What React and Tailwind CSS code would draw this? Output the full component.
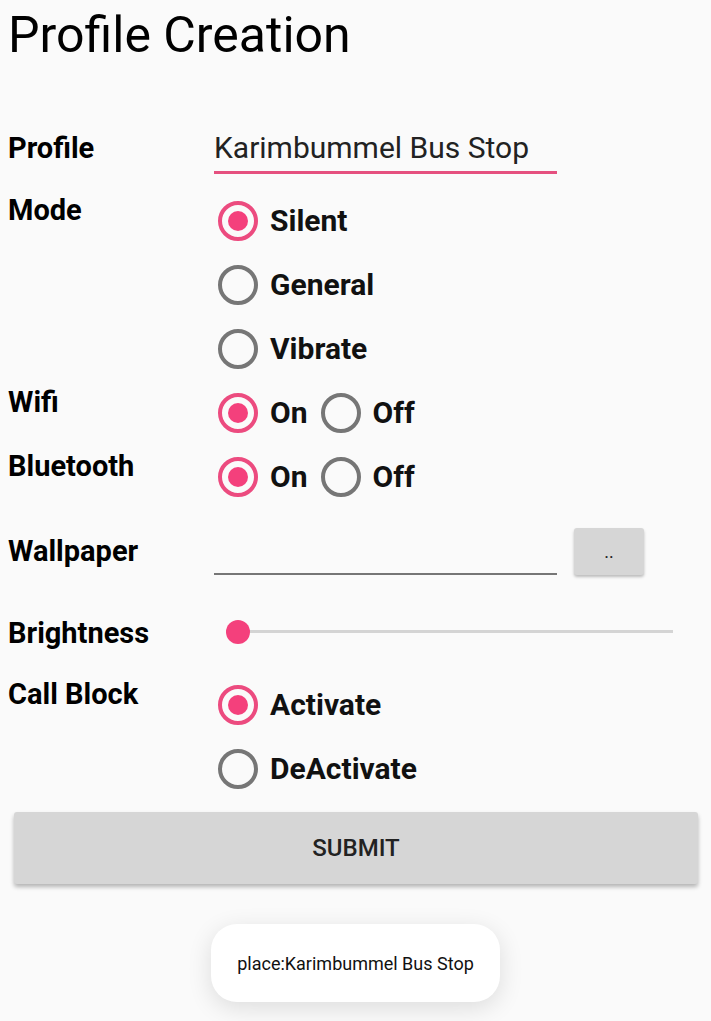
import React from "react";

function Radio({ checked, label, className = "" }) {
  return (
    <div className={"flex items-center " + className}>
      <div
        className={
          "w-[40px] h-[40px] rounded-full border-[4px] flex items-center justify-center shrink-0 " +
          (checked ? "border-[#ec4b7f]" : "border-[#767676]")
        }
      >
        {checked && <div className="w-[20px] h-[20px] rounded-full bg-[#f4407c]" />}
      </div>
      <span className="ml-[12px] text-[30px] font-bold text-[#111] leading-[32px]">{label}</span>
    </div>
  );
}

function Label({ children, mt = "mt-[5px]" }) {
  return (
    <div className={"pl-2 text-[29px] font-bold text-black leading-[32px] " + mt}>{children}</div>
  );
}

export default function App() {
  return (
    <div
      className="w-[711px] h-[1021px] bg-[#fafafa] overflow-hidden"
      style={{ fontFamily: "Roboto, 'Noto Sans', sans-serif" }}
    >
      <div className="h-[70px] flex items-center pl-2 text-[50px] text-black">Profile Creation</div>

      <div className="mt-[52px] grid grid-cols-[214px_1fr]">
        {/* Profile */}
        <Label mt="mt-[10px]">Profile</Label>
        <div className="h-[67px]">
          <div className="w-[343px] pt-[8px] pb-[5px] border-b-[3px] border-[#e5507f] text-[30px] leading-[36px] text-[#222]">
            Karimbummel Bus Stop
          </div>
        </div>

        {/* Mode */}
        <Label>Mode</Label>
        <div className="flex flex-col">
          <Radio checked label="Silent" className="h-[64px] pl-[4px]" />
          <Radio label="General" className="h-[64px] pl-[4px]" />
          <Radio label="Vibrate" className="h-[64px] pl-[4px]" />
        </div>

        {/* Wifi */}
        <Label>Wifi</Label>
        <div className="h-[64px] flex items-center pl-[4px]">
          <Radio checked label="On" />
          <Radio label="Off" className="ml-[13px]" />
        </div>

        {/* Bluetooth */}
        <Label>Bluetooth</Label>
        <div className="h-[64px] flex items-center pl-[4px]">
          <Radio checked label="On" />
          <Radio label="Off" className="ml-[13px]" />
        </div>

        {/* Wallpaper */}
        <Label mt="mt-[26px]">Wallpaper</Label>
        <div className="h-[92px] flex items-start">
          <div className="w-[343px] h-[66px] border-b-2 border-[#767676]" />
          <div className="ml-[17px] mt-[19px] w-[70px] h-[47px] bg-[#d6d6d6] rounded-[3px] shadow-[0_2px_3px_rgba(0,0,0,0.25)] flex items-center justify-center text-[18px] text-[#222]">
            ..
          </div>
        </div>

        {/* Brightness */}
        <Label mt="mt-[16px]">Brightness</Label>
        <div className="h-[72px]">
          <div className="relative ml-[12px] mt-[19px] w-[447px] h-[24px]">
            <div className="absolute left-0 right-0 top-[10px] h-[3px] bg-[#d4d4d4]" />
            <div className="absolute left-0 top-0 w-[24px] h-[24px] rounded-full bg-[#f4407c]" />
          </div>
        </div>

        {/* Call Block */}
        <Label>Call Block</Label>
        <div className="flex flex-col">
          <Radio checked label="Activate" className="h-[64px] pl-[4px]" />
          <Radio label="DeActivate" className="h-[64px] pl-[4px]" />
        </div>
      </div>

      <div className="mt-[11px] mx-[14px] w-[684px] h-[72px] bg-[#d6d6d6] rounded-[3px] shadow-[0_3px_4px_rgba(0,0,0,0.28)] flex items-center justify-center text-[24px] font-medium text-[#222]">
        SUBMIT
      </div>

      <div className="mt-[40px] mx-auto w-[289px] h-[78px] bg-white rounded-[26px] shadow-[0_6px_24px_rgba(0,0,0,0.12)] flex items-center justify-center text-[18px] text-[#111]">
        place:Karimbummel Bus Stop
      </div>
    </div>
  );
}
